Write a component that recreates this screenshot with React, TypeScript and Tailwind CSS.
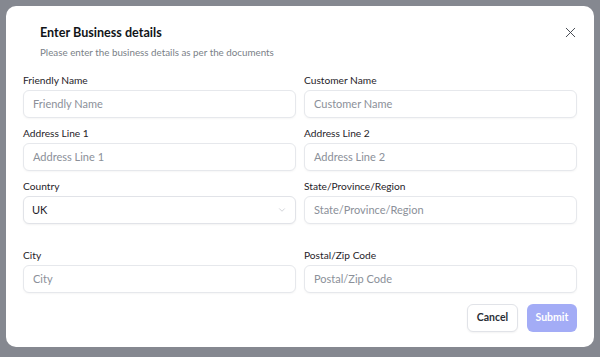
import { X, ChevronDown } from 'lucide-react'

const font = { fontFamily: 'Lato, "Noto Sans", sans-serif' }

function Field({
  label,
  placeholder,
  className = '',
}: {
  label: string
  placeholder: string
  className?: string
}) {
  return (
    <div className={`flex flex-col ${className}`}>
      <label className="text-[10.2px] leading-[14px] text-[#1f2329] mb-[3px]">{label}</label>
      <div className="h-[28px] rounded-md border border-[#e6e8ec] bg-white shadow-[0_1px_2px_rgba(0,0,0,0.04)] flex items-center px-[9px] text-[11px] text-[#8b9099]">
        {placeholder}
      </div>
    </div>
  )
}

export default function App() {
  return (
    <div style={font} className="w-[600px] h-[357px] bg-[#858890] p-[6px]">
      <div className="relative w-[588px] h-[341px] bg-white rounded-[10px] flex flex-col">
        <button className="absolute right-[15px] top-[18px] text-[#3a3f47]">
          <X className="w-[17px] h-[17px]" strokeWidth={1.3} />
        </button>
        <div className="pl-[34px] pt-[17px]">
          <h2 className="text-[12.6px] leading-[20px] font-bold text-[#111418]">Enter Business details</h2>
          <p className="mt-[2px] text-[9.8px] leading-[14px] text-[#7a7f88]">
            Please enter the business details as per the documents
          </p>
        </div>
        <div className="px-[17px] mt-[14px] grid grid-cols-2 gap-x-2 gap-y-[8px]">
          <Field label="Friendly Name" placeholder="Friendly Name" />
          <Field label="Customer Name" placeholder="Customer Name" />
          <Field label="Address Line 1" placeholder="Address Line 1" />
          <Field label="Address Line 2" placeholder="Address Line 2" />
          <div className="flex flex-col">
            <label className="text-[10.2px] leading-[14px] text-[#1f2329] mb-[3px]">Country</label>
            <div className="h-[28px] rounded-md border border-[#e1e3e8] bg-white shadow-[0_1px_2px_rgba(0,0,0,0.05)] flex items-center justify-between px-[8px] text-[11px] text-[#1f2329]">
              <span>UK</span>
              <ChevronDown className="w-[10px] h-[10px] text-[#b5b9c0]" strokeWidth={1.5} />
            </div>
          </div>
          <Field label="State/Province/Region" placeholder="State/Province/Region" />
          <Field label="City" placeholder="City" className="mt-[16px]" />
          <Field label="Postal/Zip Code" placeholder="Postal/Zip Code" className="mt-[16px]" />
        </div>
        <div className="px-[17px] mt-[11px] flex justify-end gap-[9px]">
          <button className="h-[28px] w-[51px] rounded-md border border-[#e1e3e8] bg-white text-[10.5px] font-bold text-[#2a2e35] shadow-[0_1px_2px_rgba(0,0,0,0.05)]">
            Cancel
          </button>
          <button className="h-[28px] w-[50px] rounded-md bg-[#a3acf6] text-[10.5px] font-bold text-white">
            Submit
          </button>
        </div>
      </div>
    </div>
  )
}
